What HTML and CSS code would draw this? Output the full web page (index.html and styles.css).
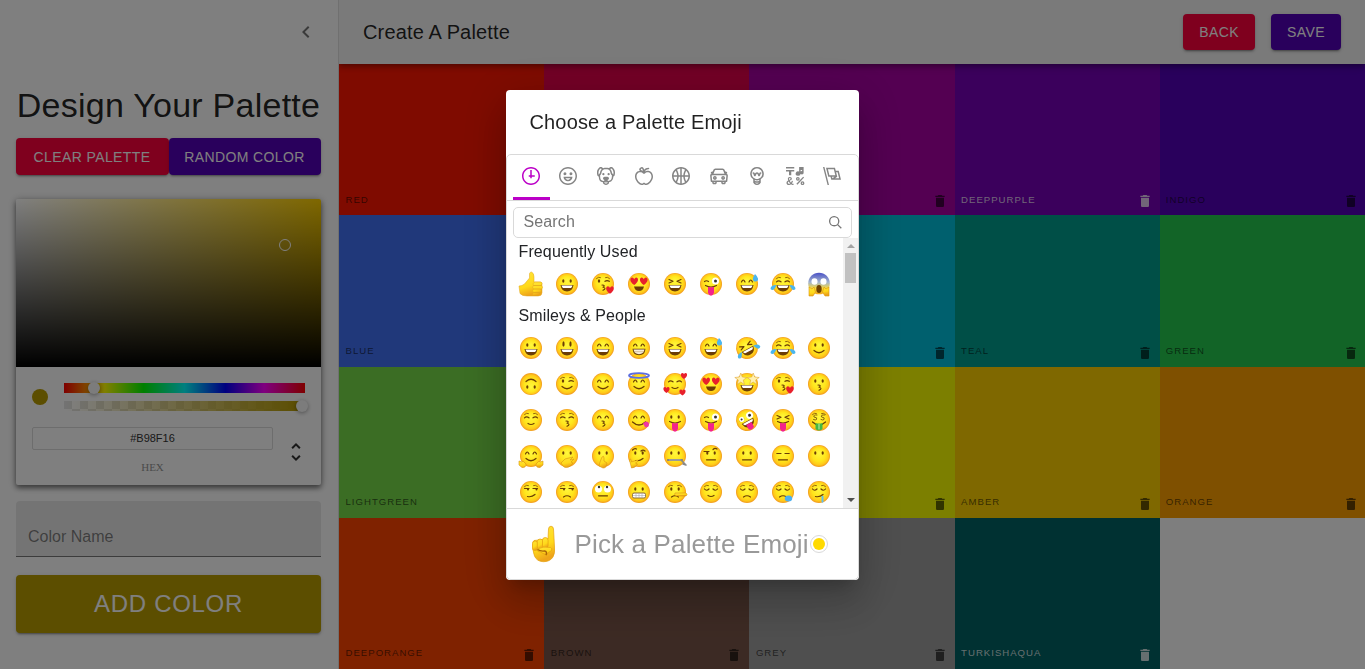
FILE: index.html
```html
<!DOCTYPE html>
<html lang="en">
<head>
<meta charset="utf-8">
<title>Create A Palette</title>
<link rel="stylesheet" href="styles.css">
</head>
<body>
<svg class="defs" width="0" height="0" aria-hidden="true">
  <defs>
    <radialGradient id="face" cx=".5" cy=".5" r=".5" fx=".5" fy=".35"><stop offset="0" stop-color="#fff83e"/><stop offset=".6" stop-color="#ffe51c"/><stop offset=".85" stop-color="#ffc91a"/><stop offset="1" stop-color="#f0981e"/></radialGradient>
    <linearGradient id="scream" x2="0" y2="1"><stop offset="0" stop-color="#4a51c8"/><stop offset=".45" stop-color="#a5b6cc"/><stop offset=".75" stop-color="#ffdb2e"/><stop offset="1" stop-color="#f2a51f"/></linearGradient>
    <linearGradient id="hand" x2=".3" y2="1"><stop offset="0" stop-color="#ffe43a"/><stop offset=".65" stop-color="#ffd91a"/><stop offset="1" stop-color="#eea41a"/></linearGradient>
    <symbol id="trash" viewBox="0 0 24 24"><path d="M6 19c0 1.1.9 2 2 2h8c1.1 0 2-.9 2-2V7H6v12zM19 4h-3.500l-1-1h-5l-1 1H5v2h14V4z"/></symbol>
  </defs>
</svg>
<div class="app">
  <aside class="drawer">
    <div class="drawer-head"><svg width="24" height="24" viewBox="0 0 24 24"><path d="M15.410 7.410L14 6l-6 6 6 6 1.410-1.410L10.830 12z"/></svg></div>
    <div class="drawer-body">
      <h1 class="drawer-title">Design Your Palette</h1>
      <div class="drawer-buttons"><button class="btn btn-red">Clear Palette</button><button class="btn btn-indigo">Random Color</button></div>
      <div class="picker">
        <div class="saturation"><i class="sat-pointer"></i></div>
        <div class="controls">
          <div class="slider-row">
            <i class="swatch"></i>
            <div class="sliders"><div class="hue"><i class="knob knob-hue"></i></div><div class="alpha"><i class="knob knob-alpha"></i></div></div>
          </div>
          <div class="hex-row">
            <div class="hex"><div class="hex-input">#B98F16</div><span class="hex-label">HEX</span></div>
            <svg class="toggle" width="24" height="24" viewBox="0 0 24 24"><path d="M12,18.170L8.830,15L7.420,16.410L12,21L16.590,16.410L15.170,15M12,5.830L15.170,9L16.580,7.590L12,3L7.410,7.590L8.830,9L12,5.830Z"/></svg>
          </div>
        </div>
      </div>
      <div class="field">Color Name</div>
      <button class="btn btn-add">Add Color</button>
    </div>
  </aside>
  <main class="main">
    <header class="appbar"><h2 class="appbar-title">Create A Palette</h2><button class="btn btn-red">Back</button><button class="btn btn-indigo">Save</button></header>
    <section class="tiles" id="tiles"></section>
  </main>
</div>
<div class="backdrop">
  <div class="dialog">
    <h2 class="dialog-title">Choose a Palette Emoji</h2>
    <div class="mart">
      <nav class="anchors">
        <span class="anchor selected"><svg viewBox="0 0 24 24"><path d="M13 4h-2l-.001 7H9v2h2v2h2v-2h4v-2h-4z"/><path d="M12 0C5.373 0 0 5.373 0 12s5.373 12 12 12 12-5.373 12-12S18.627 0 12 0m0 22C6.486 22 2 17.514 2 12S6.486 2 12 2s10 4.486 10 10-4.486 10-10 10"/></svg></span>
        <span class="anchor"><svg viewBox="0 0 24 24"><path d="M12 0C5.373 0 0 5.373 0 12s5.373 12 12 12 12-5.373 12-12S18.627 0 12 0m0 22C6.486 22 2 17.514 2 12S6.486 2 12 2s10 4.486 10 10-4.486 10-10 10"/><path d="M8 7a2 2 0 1 0-.001 3.999A2 2 0 0 0 8 7M16 7a2 2 0 1 0-.001 3.999A2 2 0 0 0 16 7M15.232 15c-.693 1.195-1.870 2-3.349 2-1.477 0-2.655-.805-3.347-2H15m3-2H6a6 6 0 1 0 12 0"/></svg></span>
        <span class="anchor"><svg viewBox="0 0 24 24"><path d="M15.500 8a1.500 1.500 0 1 0 .001 3.001A1.500 1.500 0 0 0 15.500 8M8.500 8a1.500 1.500 0 1 0 .001 3.001A1.500 1.500 0 0 0 8.500 8"/><path d="M18.933 0h-.027c-.970 0-2.138.787-3.018 1.497-1.274-.374-2.612-.510-3.887-.510-1.285 0-2.616.133-3.874.517C7.245.790 6.069 0 5.093 0h-.027C3.352 0 .070 2.670.002 7.026c-.039 2.479.276 4.238 1.040 5.013.254.258.882.677 1.295.882.191 3.177.922 5.238 2.536 6.380.897.637 2.187.949 3.200 1.102C8.040 20.600 8 20.795 8 21c0 1.773 2.350 3 4 3 1.648 0 4-1.227 4-3 0-.201-.038-.393-.072-.586 2.573-.385 5.435-1.877 5.925-7.587.396-.220.887-.568 1.104-.788.763-.774 1.079-2.534 1.040-5.013C23.929 2.670 20.646 0 18.933 0M3.223 9.135c-.237.281-.837 1.155-.884 1.238-.150-.410-.368-1.349-.337-3.291.051-3.281 2.478-4.972 3.091-5.031.256.015.731.270 1.265.646-1.110 1.171-2.275 2.915-2.352 5.125-.133.546-.398.858-.783 1.313M12 22c-.901 0-1.954-.693-2-1 0-.654.475-1.236 1-1.602V20a1 1 0 1 0 2 0v-.602c.524.365 1 .947 1 1.602-.046.307-1.099 1-2 1m3-3.480v.020a4.752 4.752 0 0 0-1.262-1.020c1.092-.516 2.239-1.334 2.239-2.217 0-1.842-1.781-2.195-3.977-2.195-2.196 0-3.978.354-3.978 2.195 0 .883 1.148 1.701 2.238 2.217A4.800 4.800 0 0 0 9 18.539v-.025c-1-.076-2.182-.281-2.973-.842-1.301-.920-1.838-3.045-1.853-6.478l.023-.041c.496-.826 1.490-1.450 1.804-3.102 0-2.047 1.357-3.631 2.362-4.522C9.370 3.178 10.555 3 11.948 3c1.447 0 2.685.192 3.733.570 1 .900 2.316 2.465 2.316 4.480.313 1.651 1.307 2.275 1.803 3.102.035.058.068.117.102.178-.059 5.967-1.949 7.010-4.902 7.190m6.628-8.202c-.037-.065-.074-.130-.113-.195a7.587 7.587 0 0 0-.739-.987c-.385-.455-.648-.768-.782-1.313-.076-2.209-1.241-3.954-2.353-5.124.531-.376 1.004-.630 1.261-.647.636.071 3.044 1.764 3.096 5.031.027 1.810-.347 3.218-.370 3.235"/></svg></span>
        <span class="anchor"><svg viewBox="0 0 24 24"><path d="M17 4.978c-1.838 0-2.876.396-3.680.934.513-1.172 1.768-2.934 4.680-2.934a1 1 0 0 0 0-2c-2.921 0-4.629 1.365-5.547 2.512-.064.078-.119.162-.180.244C11.730 1.838 10.798.023 9.207.023 8.579.022 7.850.306 7 .978 5.027 2.540 5.329 3.902 6.492 4.999 3.609 5.222 0 7.352 0 12.969c0 4.582 4.961 11.009 9 11.009 1.975 0 2.371-.486 3-1 .629.514 1.025 1 3 1 4.039 0 9-6.418 9-11 0-5.953-4.055-8-7-8M8.242 2.546c.641-.508.943-.523.965-.523.426.169.975 1.405 1.357 3.055-1.527-.629-2.741-1.352-2.980-1.846.059-.112.241-.356.658-.686M15 21.978c-1.080 0-1.210-.109-1.559-.402l-.176-.146c-.367-.302-.816-.452-1.266-.452s-.898.150-1.266.452l-.176.146c-.347.292-.477.402-1.557.402-2.813 0-7-5.389-7-9.009 0-5.823 4.488-5.991 5-5.991 1.939 0 2.484.471 3.387 1.251l.323.276a1.995 1.995 0 0 0 2.580 0l.323-.276c.902-.780 1.447-1.251 3.387-1.251.512 0 5 .168 5 6 0 3.617-4.187 9-7 9"/></svg></span>
        <span class="anchor"><svg viewBox="0 0 24 24"><path d="M12 0C5.373 0 0 5.372 0 12c0 6.627 5.373 12 12 12 6.628 0 12-5.373 12-12 0-6.628-5.372-12-12-12m9.949 11H17.050c.224-2.527 1.232-4.773 1.968-6.113A9.966 9.966 0 0 1 21.949 11M13 11V2.051a9.945 9.945 0 0 1 4.432 1.564c-.858 1.491-2.156 4.220-2.392 7.385H13zm-2 0H8.961c-.238-3.165-1.536-5.894-2.393-7.385A9.950 9.950 0 0 1 11 2.051V11zm0 2v8.949a9.937 9.937 0 0 1-4.432-1.564c.857-1.492 2.155-4.221 2.393-7.385H11zm4.040 0c.236 3.164 1.534 5.893 2.392 7.385A9.920 9.920 0 0 1 13 21.949V13h2.040zM4.982 4.887C5.718 6.227 6.726 8.473 6.951 11h-4.900a9.977 9.977 0 0 1 2.931-6.113M2.051 13h4.900c-.226 2.527-1.233 4.771-1.969 6.113A9.972 9.972 0 0 1 2.051 13m16.967 6.113c-.735-1.342-1.744-3.586-1.968-6.113h4.899a9.961 9.961 0 0 1-2.931 6.113"/></svg></span>
        <span class="anchor"><svg viewBox="0 0 24 24"><path d="M6.500 12C5.122 12 4 13.121 4 14.500S5.122 17 6.500 17 9 15.879 9 14.500 7.878 12 6.500 12m0 3c-.275 0-.500-.225-.500-.500s.225-.500.500-.500.500.225.500.500-.225.500-.500.500M17.500 12c-1.378 0-2.500 1.121-2.500 2.500s1.122 2.500 2.500 2.500 2.500-1.121 2.500-2.500-1.122-2.500-2.500-2.500m0 3c-.275 0-.500-.225-.500-.500s.225-.500.500-.500.500.225.500.500-.225.500-.500.500"/><path d="M22.482 9.494l-1.039-.346L21.400 9h.600c.552 0 1-.439 1-.992 0-.006-.003-.008-.003-.008H23c0-1-.889-2-1.984-2h-.642l-.731-1.717C19.262 3.012 18.091 2 16.764 2H7.236C5.909 2 4.738 3.012 4.357 4.283L3.626 6h-.642C1.889 6 1 7 1 8h.003S1 8.002 1 8.008C1 8.561 1.448 9 2 9h.600l-.043.148-1.039.346a2.001 2.001 0 0 0-1.359 2.097l.751 7.508a1 1 0 0 0 .994.901H3v1c0 1.103.896 2 2 2h2c1.104 0 2-.897 2-2v-1h6v1c0 1.103.896 2 2 2h2c1.104 0 2-.897 2-2v-1h1.096a.999.999 0 0 0 .994-.901l.751-7.508a2.001 2.001 0 0 0-1.359-2.097M6.273 4.857C6.402 4.430 6.788 4 7.236 4h9.527c.448 0 .834.430.963.857L19.313 9H4.688l1.585-4.143zM7 21H5v-1h2v1zm12 0h-2v-1h2v1zm2.189-3H2.811l-.662-6.607L3 11h18l.852.393L21.189 18z"/></svg></span>
        <span class="anchor"><svg viewBox="0 0 24 24"><path d="M12 0a9 9 0 0 0-5 16.482V21s2.035 3 5 3 5-3 5-3v-4.518A9 9 0 0 0 12 0zm0 2c3.860 0 7 3.141 7 7s-3.140 7-7 7-7-3.141-7-7 3.140-7 7-7zM9 17.477c.940.332 1.946.523 3 .523s2.060-.190 3-.523v.834c-.910.436-1.925.689-3 .689a6.924 6.924 0 0 1-3-.690v-.833zm.236 3.070A8.854 8.854 0 0 0 12 21c.965 0 1.888-.167 2.758-.451C14.155 21.173 13.153 22 12 22c-1.102 0-2.117-.789-2.764-1.453z"/><path d="M14.745 12.449h-.004c-.852-.024-1.188-.858-1.577-1.824-.421-1.061-.703-1.561-1.182-1.566h-.009c-.481 0-.783.497-1.235 1.537-.436.982-.801 1.811-1.636 1.791l-.276-.043c-.565-.171-.853-.691-1.284-1.794-.125-.313-.202-.632-.270-.913-.051-.213-.127-.530-.195-.634C7.067 9.004 7.039 9 6.990 9A1 1 0 0 1 7 7h.010c1.662.017 2.015 1.373 2.198 2.134.486-.981 1.304-2.058 2.797-2.075 1.531.018 2.280 1.153 2.731 2.141l.002-.008C14.944 8.424 15.327 7 16.979 7h.032A1 1 0 1 1 17 9h-.011c-.149.076-.256.474-.319.709a6.484 6.484 0 0 1-.311.951c-.429.973-.790 1.789-1.614 1.789"/></svg></span>
        <span class="anchor"><svg viewBox="0 0 24 24"><path d="M0 0h11v2H0zM4 11h3V6h4V4H0v2h4zM23.500 0h-6v6a3.300 3 0 1 0 2 2.700V4h2v1.500a2.400 2.200 0 1 0 2 2z"/><path d="M14.500 23L23.500 13.500" stroke="#858585" stroke-width="1.800"/><circle cx="15.800" cy="15.800" r="1.700" fill="none" stroke="#858585" stroke-width="1.700"/><circle cx="22" cy="21.500" r="1.700" fill="none" stroke="#858585" stroke-width="1.700"/><text x="0" y="23.500" font-size="14.500" font-weight="bold">&amp;</text></svg></span>
        <span class="anchor"><svg viewBox="0 0 24 24"><path d="M0 0l6.084 24H8L1.916 0zM21 5h-4l-1-4H4l3 12h3l1 4h13L21 5zM6.563 3h7.875l2 8H8.563l-2-8zm8.832 10l-2.856 1.904L12.063 13h3.332zM19 13l-1.500-6h1.938l2 8H16l3-2z"/></svg></span>
      </nav>
      <div class="search"><div class="search-box"><span>Search</span><svg width="13" height="13" viewBox="0 0 20 20"><path d="M12.900 14.320a8 8 0 1 1 1.410-1.410l5.350 5.330-1.420 1.420-5.330-5.340zM8 14A6 6 0 1 0 8 2a6 6 0 0 0 0 12z"/></svg></div></div>
      <div class="scroll">
        <div class="list">
          <div class="category">Frequently Used</div>
          <div class="emojis" id="frequent"></div>
          <div class="category">Smileys &amp; People</div>
          <div class="emojis" id="smileys"></div>
        </div>
        <div class="bar"><i class="arrow up"></i><i class="thumb"></i><i class="arrow down"></i></div>
      </div>
      <div class="preview">
        <svg class="point" width="38" height="38" viewBox="0 0 38 38"><g fill="url(#hand)" stroke="#e5a010" stroke-width=".7"><path d="M8 17q-1 8 1.500 14 2.500 5.700 9 5.700T28 32q2.300-4 1.500-10L28.500 4q-.300-2.800-2.500-2.800T23.500 4L23 14 9 15.500z"/><rect x="7.500" y="16" width="5.200" height="9.500" rx="2.600"/><rect x="12.300" y="14" width="5.600" height="10.500" rx="2.800"/><rect x="17.500" y="12.500" width="5.600" height="11" rx="2.800"/><path d="M12 24q6-3 13.500-1.500 2 1 1 3-3 1-5 5l-6-3.500q-3.500 0-3.500-3z"/></g><path d="M12.500 24.500q3 2 7 1.500 3 .500 1.500 4" fill="none" stroke="#a96508" stroke-width="1.400"/></svg>
        <span class="preview-text">Pick a Palette Emoji</span><i class="skin"></i>
      </div>
    </div>
  </div>
</div>
<script src="app.js"></script>
</body>
</html>
```

FILE: styles.css
```css
* { box-sizing: border-box; }
body { margin: 0; overflow: hidden; font-family: "Liberation Sans", Arial, sans-serif; color: rgba(0,0,0,.87); }
.defs { position: absolute; }
h1, h2 { margin: 0; font-weight: 400; }
i { display: block; }
.app { display: flex; width: 100vw; height: 100vh; }

.drawer { width: 339px; flex: none; border-right: 1px solid #e0e0e0; background: #fff; }
.drawer-head { height: 64px; display: flex; align-items: center; justify-content: flex-end; padding-right: 20px; }
.drawer-head svg { fill: rgba(0,0,0,.54); }
.drawer-body { padding: 20px 17px 0 16px; }
.drawer-title { font-size: 34px; line-height: 42px; letter-spacing: .25px; text-align: center; white-space: nowrap; }
.drawer-buttons { display: flex; margin-top: 12px; height: 37px; }
.btn { border: 0; border-radius: 4px; padding: 6px 16px; font: 14px/24px "Liberation Sans", Arial, sans-serif; letter-spacing: .4px; text-transform: uppercase; color: #fff; white-space: nowrap; box-shadow: 0 3px 1px -2px rgba(0,0,0,.2), 0 2px 2px rgba(0,0,0,.14), 0 1px 5px rgba(0,0,0,.12); }
.drawer-buttons .btn { flex: 153 0 0; padding: 6px 1px 6px 0; }
.drawer-buttons .btn + .btn { flex-grow: 152; }
.btn-red { background: #ff003c; }
.btn-indigo { background: #5300b8; }
.btn-add { display: block; width: 100%; height: 58px; margin-top: 18px; font-size: 24px; letter-spacing: .69px; background: #b89c00; }

.picker { margin-top: 24px; border-radius: 2px; background: #fff; box-shadow: 0 3px 5px rgba(0,0,0,.42), 0 1px 8px rgba(0,0,0,.3); }
.saturation { position: relative; height: 168px; border-radius: 2px 2px 0 0; background: linear-gradient(to top, #000, transparent), linear-gradient(to right, #fff, #ffd000); }
.sat-pointer { position: absolute; left: 263px; top: 40px; width: 12px; height: 12px; border: 1px solid #fff; border-radius: 50%; }
.controls { height: 118px; padding: 16px; }
.slider-row { display: flex; align-items: center; }
.swatch { width: 16px; height: 16px; margin-right: 16px; border-radius: 50%; background: #b89c00; }
.sliders { flex: 1; display: grid; gap: 8px; }
.hue, .alpha { position: relative; height: 10px; }
.hue { background: linear-gradient(to right, #f00 0, #ff0 17%, #0f0 33%, #0ff 50%, #00f 67%, #f0f 83%, #f00); }
.alpha { background: linear-gradient(to right, rgba(184,156,0,0), #b89c00), repeating-conic-gradient(#fff 0 25%, #e6e6e6 0 50%) 0 0 / 16px 16px; }
.knob { position: absolute; top: -1px; width: 12px; height: 12px; border-radius: 50%; background: #f8f8f8; box-shadow: 0 1px 4px rgba(0,0,0,.37); }
.knob-hue { left: 24px; }
.knob-alpha { left: 232px; }
.hex-row { display: flex; justify-content: space-between; margin-top: 16px; }
.hex { width: 241px; text-align: center; }
.hex-input { height: 23px; border: 1px solid #dadada; border-radius: 2px; font-size: 11px; line-height: 21px; color: #333; }
.hex-label { display: block; margin-top: 11px; font: 11px/13px "Liberation Serif", serif; color: #969696; }
.toggle { margin: 13px -3px 0 0; fill: #333; }
.field { margin-top: 16px; height: 56px; padding: 27px 12px 0; border-radius: 4px 4px 0 0; border-bottom: 1px solid rgba(0,0,0,.48); background: rgba(0,0,0,.09); font-size: 16px; line-height: 18px; color: rgba(0,0,0,.48); }

.main { flex: 1; min-width: 0; display: flex; flex-direction: column; background: #fcfcfc; }
.appbar { position: relative; height: 64px; flex: none; display: flex; align-items: center; gap: 16px; padding: 0 24px; background: #f5f5f5; box-shadow: 0 2px 4px -1px rgba(0,0,0,.2), 0 4px 5px rgba(0,0,0,.14), 0 1px 10px rgba(0,0,0,.12); clip-path: inset(0 0 -20px 0); }
.appbar-title { flex: 1; font-size: 20px; letter-spacing: .15px; }
.tiles { flex: 1; display: grid; grid-template: repeat(4, 1fr) / repeat(5, 1fr); }
.tile { display: flex; align-items: flex-end; justify-content: space-between; padding: 0 7px 6px 6.5px; color: rgba(0,0,0,.6); font-size: 9.6px; letter-spacing: 1px; text-transform: uppercase; }
.tile:nth-child(5n) { padding: 0 6px 6px; }
.tile span { line-height: 11px; padding-bottom: 4.6px; }
.tile svg { width: 16px; height: 16px; fill: currentColor; }
.tile.light { color: rgba(255,255,255,.8); }

.backdrop { position: fixed; inset: 0; display: flex; align-items: center; justify-content: center; background: rgba(0,0,0,.5); }
.dialog { width: 353px; height: 490px; margin-top: 1px; border-radius: 4px; background: #fff; overflow: hidden; }
.dialog { box-shadow: 0 11px 15px -7px rgba(0,0,0,.2), 0 24px 38px 3px rgba(0,0,0,.14), 0 9px 46px 8px rgba(0,0,0,.12); }
.dialog-title { height: 64px; padding: 16px 23.5px; font-size: 20px; line-height: 32px; letter-spacing: .15px; }
.mart { height: 426px; border: 1px solid #d9d9d9; border-radius: 5px; display: flex; flex-direction: column; color: #222427; letter-spacing: .12px; }
.anchors { height: 46px; padding: 0 6px; display: flex; border-bottom: 1px solid #d9d9d9; flex: none; }
.anchor { flex: 1; display: flex; justify-content: center; padding: 12px 1.4px 0 0; }
.anchor svg { width: 18px; height: 18px; fill: #858585; overflow: visible; }
.anchor.selected { flex: 0 0 37px; border-bottom: 3px solid #bb00c7; }
.anchor.selected svg { fill: #bb00c7; }
.search { padding: 6px 6px 0; }
.search-box { display: flex; justify-content: space-between; align-items: center; height: 31px; padding: 0 9px 0 9.500px; border: 1px solid #d9d9d9; border-radius: 5px; font-size: 16px; color: #757575; }
.search-box span { padding-bottom: 2px; }
.search-box svg { fill: #777; }
.scroll { display: flex; height: 270px; overflow: hidden; }
.list { flex: 1; min-width: 0; padding-left: 6px; }
.category { height: 28px; padding: 5px; padding-left: 5.500px; font-size: 16px; line-height: 18px; }
.emojis { display: grid; grid-template-columns: repeat(9, 36px); grid-auto-rows: 36px; padding-left: 6px; }
.emojis svg { width: 24px; height: 24px; margin-top: 6px; overflow: visible; }
.bar { flex: none; width: 15px; background: #f1f1f1; display: flex; flex-direction: column; align-items: center; padding: 6px 0; }
.arrow { border: 4px solid transparent; }
.up { border-top: 0; border-bottom-color: #a3a3a3; }
.thumb { width: 11px; height: 30px; margin-top: 5px; background: #c1c1c1; }
.down { margin-top: auto; border-bottom: 0; border-top-color: #505050; }
.preview { height: 71px; border-top: 1px solid #d9d9d9; display: flex; align-items: center; padding-left: 17px; }
.point { margin-left: .5px; }
.preview-text { margin-left: 12px; font-size: 26px; color: #999; letter-spacing: .15px; white-space: nowrap; }
.skin { width: 18px; height: 18px; margin-left: 1px; border: 1px solid #d9d9d9; border-radius: 50%; background: #ffda00; background-clip: content-box; padding: 2px; }
```

FILE: app.js
```javascript
const tiles = [
  ['Red', '#ff1700'], ['Pink', '#e6004c'], ['Purple', '#a800a4'], ['DeepPurple', '#7600b8', 1], ['Indigo', '#5200b8'],
  ['Blue', '#4070f4'], ['LightBlue', '#00a0f4'], ['Cyan', '#00c0dc'], ['Teal', '#009e8e'], ['Green', '#24c84e'],
  ['LightGreen', '#76da48'], ['Lime', '#c0e030'], ['Yellow', '#f8ff00'], ['Amber', '#ffd000'], ['Orange', '#ffa000'],
  ['DeepOrange', '#ff4400'], ['Brown', '#795548'], ['Grey', '#9e9e9e'], ['TurkishAqua', '#006264', 1]
];
document.getElementById('tiles').innerHTML = tiles.map(([name, color, light]) =>
  `<div class="tile${light ? ' light' : ''}" style="background:${color}"><span>${name}</span><svg><use href="#trash"/></svg></div>`).join('');

const INK = '#6b3d05';
const line = (d, c = INK, w = 1.2) => `<path d="${d}" fill="none" stroke="${c}" stroke-width="${w}" stroke-linecap="round" stroke-linejoin="round"/>`;
const fill = (d, c) => `<path d="${d}" fill="${c}"/>`;
const dot = (x, y, rx, ry, c = INK) => `<ellipse cx="${x}" cy="${y}" rx="${rx}" ry="${ry}" fill="${c}"/>`;
const heart = (x, y, s) => `<path transform="translate(${x} ${y}) scale(${s})" d="M0 4C-5 1-4-3-2-3q1.500 0 2 1.500Q.5-3 2-3C4-3 5 1 0 4" fill="#e8202c"/>`;
const hand = d => `<path d="${d}" fill="url(#hand)" stroke="#d9930f" stroke-width=".6"/>`;
const ball = '<circle cx="12" cy="12" r="11" fill="url(#face)"/>';
const brows = line('M5.500 6.500q2-2 4-1M14.500 5.500q2-1 4 1', '#8b5a0c', .9);

const eyes = {
  empty: '',
  dots: dot(8.3, 9, 1.100, 1.700) + dot(15.700, 9, 1.100, 1.700),
  tall: dot(8.5, 8, 1.100, 2.800) + dot(15.500, 8, 1.100, 2.800),
  happy: line('M6.500 10q1.700-4 3.500 0M14 10q1.700-4 3.500 0'),
  squint: line('M6 7.500l4 1.800-4 1.700M18 7.500l-4 1.800 4 1.700'),
  closed: line('M5.500 9q2 2.500 4.500 0M14 9q2.500 2.500 4.500 0'),
  arcs: line('M5.500 9.800q2-2 4.500 0M14 9.800q2.500-2 4.500 0'),
  flat: line('M5.800 9.500h4.200M14 9.500h4.200'),
  wink: dot(8, 9, 1.200, 1.700) + line('M14 9.300q2-1.500 4.300 0'),
  side: line('M5.500 8.500h4.500M14 8.500h4.500') + dot(9, 9.400, 1, 1) + dot(17.500, 9.400, 1, 1),
  hearts: heart(7.200, 8.700, 1.050) + heart(16.800, 8.700, 1.050),
  crazy: line('M5.500 9.500q2-1.500 4 0') + dot(16.500, 9, 3.500, 3.500, '#fff') + dot(16.500, 9, 1.500, 1.500, '#333'),
  roll: dot(7.500, 9, 3.500, 3.500, '#fff') + dot(16.500, 9, 3.500, 3.500, '#fff') + dot(8, 7, 1.200, 1.200, '#333') + dot(16, 7, 1.200, 1.200, '#333'),
  stars: [5.800, 18.200].map(x => `<path transform="translate(${x} 7)" d="M0-6L1.500-2 6-1.500 2.500 1 3.500 5.500 0 3-3.500 5.500-2.500 1-6-1.500-1.500-2z" fill="#fff0b0" stroke="#dfa83a" stroke-width=".6"/>`).join('')
};
const mouths = {
  grin: fill('M5.500 13h13q-1 6.500-6.500 6.500T5.500 13', INK) + fill('M6.500 13.600h11q-.500 2-1.500 2.300H8q-1-.500-1.500-2.300', '#fff'),
  beam: fill('M5.500 12.800h13q-.500 6.500-6.500 6.500t-6.500-6.500', INK) + fill('M6.500 13.600h11q-1 4.600-5.500 4.600t-5.500-4.600', '#f7efdc') + line('M7 15.700h10', '#af905a', .5),
  smile: line('M7 14.500q5 4.500 10 0'),
  wide: line('M5.500 14q6.500 6 13 0'),
  small: line('M9 15.500q3 2 6 0'),
  flat: line('M7.500 15.800h9'),
  frown: line('M8.500 17q3.500-2.500 7 0'),
  smirk: line('M8.500 16.500q4 1 7.500-2'),
  kiss: line('M11 13q4 .300 1 2.300 4 .700 0 3', INK, 1.100),
  tongue: line('M6.500 13.500q5.500 3 11 0') + fill('M9 14.800q3 1 6 0v6q-1 3-3 3t-3-3z', '#f4238b'),
  none: ''
};
const drop = (x, y) => fill(`M${x} ${y}q-4 6-.500 7.500 4 .500 3.500-3-.300-2-3-4.500`, '#4cb6ef');
const tears = fill('M5.500 13q-6 0-6 4 3 3.500 6-4M18.500 13q6 0 6 4-3 3.500-6-4', '#4bb5ed');
const face = (e, m, extra = '') => ball + eyes[e] + mouths[m] + extra;
const tilt = s => `<g transform="rotate(-28 12 12)">${s}</g>`;

const set = {
  thumb: `<g stroke="#e0a41c" stroke-width=".5" fill="url(#hand)"><path d="M0 14q3 0 5.500-2l5-6V1.500Q11 0 12.500 0q2.500 1 2.500 5v5h6q2.500 0 2 2.500v8q0 3.500-4 3.500H8q-5 0-7-2.500z"/><path d="M15.500 10h6.500q2 1.500 0 3.500h-7.500q-1.500-1.500 1-3.500M14.500 13.500h8q2 2 0 3.500h-8q-2-2 0-3.500M14.500 17h7q2 2 0 3.500h-7q-2-1.500 0-3.500M14.500 20.500h5q2 1.500 0 3h-5q-2-1 0-3"/></g>`,
  grinning: face('dots', 'grin'), smiley: face('tall', 'grin'), smile: face('happy', 'grin'), beaming: face('happy', 'beam'),
  laughing: face('squint', 'grin'), sweat: face('happy', 'grin', drop(20, 2)), joy: face('arcs', 'grin', brows + tears),
  rofl: tilt(face('squint', 'grin', tears)), slight: face('dots', 'smile'), upside: `<g transform="rotate(180 12 12)">${face('dots', 'smile')}</g>`,
  wink: face('wink', 'smile', brows), blush: face('happy', 'smile'),
  halo: face('happy', 'smile', '<ellipse cx="12" cy="3.500" rx="10" ry="2.400" fill="none" stroke="#5c6ee0" stroke-width="1.800"/>'),
  loved: face('arcs', 'small', heart(3.500, 17.500, .85) + heart(21, 3.500, .85) + heart(19.500, 20, .85)),
  hearteyes: face('hearts', 'none', fill('M7 14.500h10q-1 4.500-5 4.500t-5-4.500', INK)),
  starry: face('stars', 'grin'), kissheart: face('wink', 'kiss', brows + heart(19, 17.500, 1.050)),
  kissing: face('dots', 'kiss'), relaxed: face('arcs', 'small', brows), kissclosed: face('arcs', 'kiss', brows), kisshappy: face('happy', 'kiss'),
  yum: face('happy', 'wide', fill('M16 15.500q4-4 6 0 0 5-4 3.500z', '#ef36a3')), tongue: face('dots', 'tongue'), winktongue: face('crazy', 'tongue'),
  zany: tilt(face('crazy', 'grin', dot(7.500, 9, 2.500, 2.500, '#fff') + dot(7.500, 9, 1, 1, '#333') + fill('M9 16h6v5q-3 3-6 0z', '#f4238b'))),
  squinttongue: face('squint', 'tongue'),
  money: face('empty', 'wide', brows + line('M10 7Q6 6.500 7 9q4 .500 2.500 2.500-1 1-3 0M17.500 7Q13.500 6.500 14.500 9q4 .500 2.500 2.500-1 1-3 0', '#886610', 1) + fill('M8.500 15q3.500 1 7 0v6q-3.500 3-7 0z', '#45b643') + line('M12 16v5', '#aee59a')),
  hug: face('happy', 'smile', hand('M0 17l3 1 1-1 3 3q0 4-4 3.500L0 21zM24 17l-3 1-1-1-3 3q0 4 4 3.500l3-2.500z')),
  hands: face('dots', 'none', hand('M6 19l4-4 8-2-3 3 4-1-3 3 2 1q-4 6-9 4z')),
  hush: face('dots', 'none', hand('M9 18l2-5q2-2 2 1v3l3 2q0 5-4 5l-4-2z')),
  think: face('dots', 'smirk', line('M5.500 6q2-2 4-1M14 7q2-2 4 0') + hand('M2.500 16q1-3 2 2l6-2q2 1-2 3l2 1q-2 4-6 4z')),
  zip: face('dots', 'none', line('M5 16h14', '#777', 2) + line('M6 16h12', '#ddd', .7) + line('M18 16l4 4M20 20l3 1', '#888', 1.600)),
  raised: face('dots', 'flat', line('M5 7.500h5M14 5.500q2-2 4-.500')), neutral: face('dots', 'flat'), blank: face('flat', 'flat'), mute: face('dots', 'none'),
  smirk: face('side', 'smirk', brows), unamused: face('side', 'frown', brows), roll: face('roll', 'flat'),
  grimace: face('dots', 'none', '<rect x="5.500" y="13" width="13" height="5" rx="1.500" fill="#fff" stroke="#8b6a3a"/>' + line('M6 15.500h12M9 13.500v4M12 13.500v4M15 13.500v4', '#aaa', .6)),
  lying: face('dots', 'frown', brows + hand('M12 13h11q2 1.500 0 3H13q-2-1-1-3')), relieved: face('closed', 'small', brows), pensive: face('closed', 'frown', brows),
  sleepy: face('closed', 'frown', brows + dot(17.500, 18.500, 3.700, 3, '#4eb0ef')), drool: face('closed', 'smirk', brows + fill('M14.500 16h2v6q-2 2-2-1z', '#62bdec')),
  scream: '<circle cx="12" cy="11.500" r="10.800" fill="url(#scream)"/>' + dot(7.500, 9.500, 3, 3.200, '#fff') + dot(16.500, 9.500, 3, 3.200, '#fff') + dot(12, 17, 2.700, 4, '#704100') + hand('M2 15l3 2 2-2 1.500 5-2.500 4H2zM22 15l-3 2-2-2-1.500 5 2.500 4h4z')
};
const draw = (id, names) => {
  document.getElementById(id).innerHTML = names.split(' ').map(n => `<svg viewBox="0 0 24 24">${set[n]}</svg>`).join('');
};
draw('frequent', 'thumb grinning kissheart hearteyes laughing winktongue sweat joy scream');
draw('smileys', 'grinning smiley smile beaming laughing sweat rofl joy slight upside wink blush halo loved hearteyes starry kissheart kissing relaxed kissclosed kisshappy yum tongue winktongue zany squinttongue money hug hands hush think zip raised neutral blank mute smirk unamused roll grimace lying relieved pensive sleepy drool');
```
